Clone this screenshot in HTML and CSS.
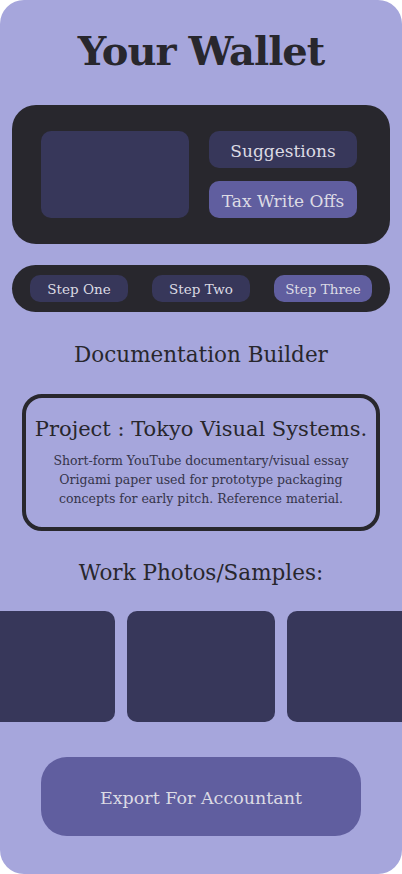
FILE: index.html
```html
<!DOCTYPE html>
<html lang="en">
  <head>
    <meta charset="UTF-8" />
    <meta name="viewport" content="width=device-width, initial-scale=1.0" />
    <title>Your Wallet</title>
    <link rel="stylesheet" href="styles.css">
  </head>
  <body>
    <div class="screen">
      <h1 class="title">Your Wallet</h1>

      <div class="wallet-card">
        <div class="card-preview"></div>
        <button class="chip">Suggestions</button>
        <button class="chip active">Tax Write Offs</button>
      </div>

      <div class="steps">
        <button class="step">Step One</button>
        <button class="step">Step Two</button>
        <button class="step active">Step Three</button>
      </div>

      <h2 class="section-title">Documentation Builder</h2>

      <div class="project">
        <h3>Project : Tokyo Visual Systems.</h3>
        <p>
          Short-form YouTube documentary/visual essay<br>
          Origami paper used for prototype packaging<br>
          concepts for early pitch. Reference material.
        </p>
      </div>

      <h2 class="section-title photos-title">Work Photos/Samples:</h2>

      <div class="photos">
        <div class="photo"></div>
        <div class="photo"></div>
        <div class="photo"></div>
      </div>

      <button class="export">Export For Accountant</button>
    </div>
  </body>
</html>
```

FILE: styles.css
```css
body {
  margin: 0;
  padding: 0;
  background-color: #ffffff;
  font-family: "DejaVu Serif", "Liberation Serif", serif;
}

.screen {
  width: 402px;
  height: 874px;
  background-color: #a6a6dc;
  border-radius: 24px;
  overflow: hidden;
  display: flex;
  flex-direction: column;
  align-items: center;
}

button {
  font-family: inherit;
  border: none;
  color: #dcdbe4;
  cursor: pointer;
}

.title {
  margin: 24px 0 0;
  font-size: 40px;
  line-height: 54px;
  color: #28272d;
  letter-spacing: -1px;
}

.wallet-card {
  box-sizing: border-box;
  width: 378px;
  height: 139px;
  margin-top: 27px;
  padding: 26px 33px 26px 29px;
  background-color: #28272d;
  border-radius: 24px;
  display: grid;
  grid-template-columns: 148px 148px;
  grid-template-rows: 37px 37px;
  column-gap: 20px;
  row-gap: 13px;
}

.card-preview {
  grid-row: span 2;
  background-color: #37375a;
  border-radius: 10px;
}

.chip {
  background-color: #37375a;
  border-radius: 10px;
  font-size: 17px;
  padding: 3px 0 0;
}

.chip.active,
.step.active {
  background-color: #605e9f;
}

.steps {
  box-sizing: border-box;
  width: 378px;
  height: 47px;
  margin-top: 21px;
  padding: 10px 18px;
  background-color: #28272d;
  border-radius: 24px;
  display: flex;
  justify-content: space-between;
}

.step {
  width: 98px;
  background-color: #37375a;
  border-radius: 10px;
  font-size: 13.5px;
  padding: 1px 0 0;
}

.section-title {
  margin: 29px 0 0;
  font-size: 21.5px;
  line-height: 28px;
  font-weight: normal;
  color: #28272d;
}

.project {
  box-sizing: border-box;
  width: 358px;
  height: 137px;
  margin-top: 25px;
  border: 4px solid #28272d;
  border-radius: 20px;
  text-align: center;
  color: #28272d;
}

.project h3 {
  margin: 16px 0 0;
  font-size: 21px;
  line-height: 30px;
  font-weight: normal;
}

.project p {
  margin: 7px 0 0;
  font-size: 12.5px;
  line-height: 19px;
  color: #35344a;
}

.photos-title {
  margin-top: 28px;
}

.photos {
  margin-top: 24px;
  display: flex;
  gap: 12px;
  justify-content: center;
}

.photo {
  flex: none;
  width: 148px;
  height: 111px;
  background-color: #37375a;
  border-radius: 10px;
}

.export {
  width: 320px;
  height: 79px;
  margin-top: 35px;
  background-color: #605e9f;
  border-radius: 26px;
  font-size: 17.5px;
  padding: 3px 0 0;
}
```
